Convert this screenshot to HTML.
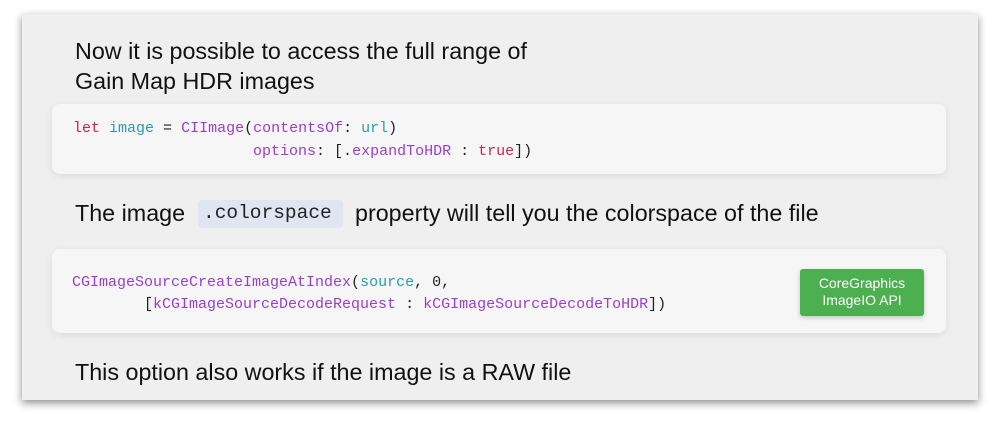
<!DOCTYPE html>
<html><head><style>
body{margin:0;width:1000px;height:426px;background:#fff;position:relative;overflow:hidden;font-family:"Liberation Sans",sans-serif}
.slide{position:absolute;left:22px;top:14px;width:956px;height:386px;background:#efefef;box-shadow:0 3px 8px rgba(0,0,0,.45)}
.t{position:absolute;color:#111;font-size:23.3px;white-space:nowrap}
.box{position:absolute;left:30px;width:894px;background:#f6f6f6;border-radius:8px;box-shadow:0 2px 8px rgba(0,0,0,.08)}
.m{position:absolute;font-family:"Liberation Mono",monospace;font-size:15px;color:#222;white-space:pre}
.k{color:#c8264f}.v{color:#2e9ab5}.p{color:#9a3fc9}
.ic{position:absolute;left:176px;top:186px;width:145px;height:28px;background:#e0e5f2;border-radius:4px}
.btn{position:absolute;left:778px;top:255px;width:124px;height:47px;background:#4caf50;border-radius:3px;color:#fff;font-size:14px;text-align:center;line-height:17px;box-shadow:0 2px 5px rgba(0,0,0,.2)}
</style></head><body>
<div class="slide">
<div class="t" style="left:53px;top:22px;line-height:30px">Now it is possible to access the full range of<br>Gain Map HDR images</div>
<div class="box" style="top:90px;height:70px">
<div class="m" style="left:21px;top:13px;line-height:23px"><span class="k">let</span> <span class="v">image</span> = <span class="p">CIImage</span>(<span class="p">contentsOf</span>: <span class="v">url</span>)
                    <span class="p">options</span>: [.<span class="p">expandToHDR</span> : <span class="k">true</span>])</div>
</div>
<div class="ic"></div>
<div class="t" style="left:53px;top:186px">The image</div>
<div class="m" style="left:181px;top:188px;font-size:19.5px">.colorspace</div>
<div class="t" style="left:333px;top:186px">property will tell you the colorspace of the file</div>
<div class="box" style="top:235px;height:84px">
<div class="m" style="left:20px;top:23px;line-height:22px;font-size:15px"><span class="p">CGImageSourceCreateImageAtIndex</span>(<span class="v">source</span>, 0,
        [<span class="p">kCGImageSourceDecodeRequest</span> : <span class="p">kCGImageSourceDecodeToHDR</span>])</div>
</div>
<div class="btn" style="padding-top:6px;height:41px">CoreGraphics<br>ImageIO API</div>
<div class="t" style="left:53px;top:345px">This option also works if the image is a RAW file</div>
</div>
</body></html>
